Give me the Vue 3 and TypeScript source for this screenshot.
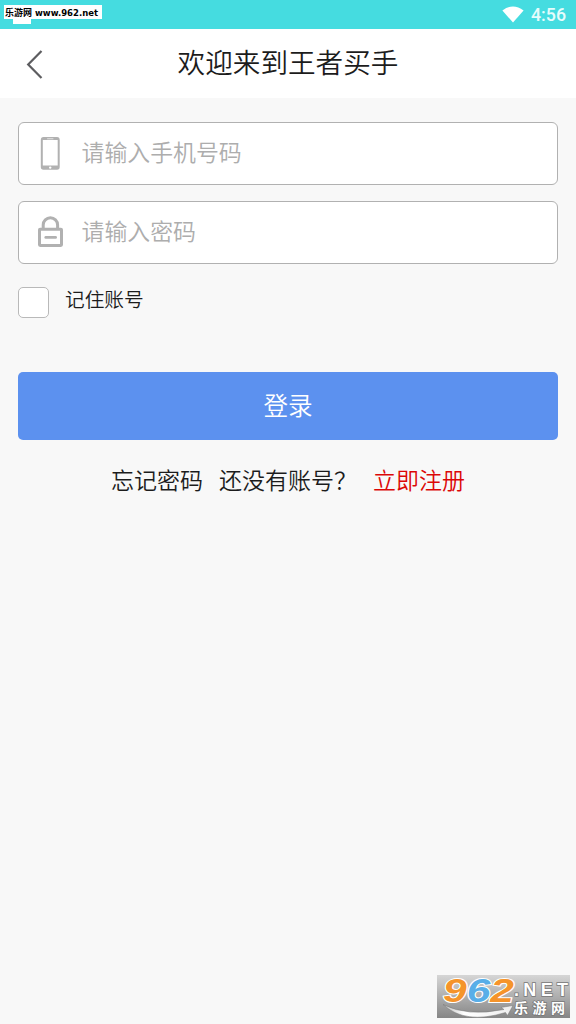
<script setup lang="ts">
import { ref } from 'vue'

const phone = ref('')
const password = ref('')
const remember = ref(false)
</script>

<template>
  <div class="screen">
    <div class="status">
      <span class="notice"></span>
      <span class="site-tag"><b class="site-name">乐游网</b><svg class="site-url" width="67" height="14" viewBox="0 0 67 14"><text x="0" y="11" textLength="63" lengthAdjust="spacingAndGlyphs">www.962.net</text></svg></span>
      <svg class="wifi" width="22" height="17" viewBox="0 0 22 17"><path d="M0.4 4.4Q11-3.6 21.6 4.4L11 16.6Z" fill="#fff" /></svg>
      <span class="clock">4:56</span>
    </div>
    <header class="bar">
      <svg class="back" width="18" height="30" viewBox="0 0 18 30"><path d="M15.5 2L2.2 15.5L15.5 29" fill="none" stroke="#5d5d60" stroke-width="2.2" /></svg>
      <h1>欢迎来到王者买手</h1>
    </header>
    <form class="form" @submit.prevent>
      <label class="field">
        <svg class="icon" width="28" height="34" viewBox="0 0 28 34">
          <path fill="#b1b1b1" fill-rule="evenodd" d="M7.5 0H21Q23.7 0 23.7 3V30Q23.7 32.8 21 32.8H7.5Q4.8 32.8 4.8 30V3Q4.8 0 7.5 0ZM6.8 3V28.6H21.7V3Z" />
          <rect x="11" y="1.3" width="6.5" height="1" rx=".5" fill="#e2e2e2" />
          <circle cx="14.2" cy="30.6" r="1.2" fill="#fff" />
        </svg>
        <input v-model="phone" type="text" placeholder="请输入手机号码" />
      </label>
      <label class="field">
        <svg class="icon" width="28" height="34" viewBox="0 0 28 34">
          <g fill="none" stroke="#b1b1b1" stroke-width="3">
            <rect x="3.5" y="13.2" width="22" height="16.2" rx=".6" />
            <path d="M7.2 13V9A7.2 7.2 0 0 1 21.6 9V13" />
            <path d="M9.8 21.4H19.6" stroke-linecap="round" stroke-width="2.8" />
          </g>
        </svg>
        <input v-model="password" type="password" placeholder="请输入密码" />
      </label>
      <label class="remember">
        <input v-model="remember" type="checkbox" />
        <span>记住账号</span>
      </label>
      <button class="login" type="submit">登录</button>
      <div class="links">
        <span>忘记密码</span>
        <span class="ask">还没有账号？</span>
        <span class="register">立即注册</span>
      </div>
    </form>
    <svg class="mark" width="133" height="43" viewBox="0 0 133 43">
      <defs>
        <linearGradient id="plate" x1="0" y1="0" x2="0" y2="1">
          <stop offset="0" stop-color="#d6d6d6" />
          <stop offset="1" stop-color="#868686" />
        </linearGradient>
        <linearGradient id="swoosh" x1="0" y1="0" x2="1" y2="0">
          <stop offset="0" stop-color="#bbb" />
          <stop offset=".3" stop-color="#fff" />
          <stop offset="1" stop-color="#eee" />
        </linearGradient>
      </defs>
      <rect width="133" height="43" fill="url(#plate)" />
      <path d="M6 29.5Q30 42 67 34.5L64 32.5L76 30.5L70.5 40.5L68.5 37.5Q28 50 6 29.5Z" fill="url(#swoosh)" stroke="#777" stroke-width=".5" />
      <g class="digits">
        <text x="6" y="27" textLength="71" lengthAdjust="spacingAndGlyphs"><tspan fill="#f5942b">9</tspan><tspan fill="#58aee8">6</tspan><tspan fill="#f5942b">2</tspan></text>
      </g>
      <text class="net" x="77" y="21" textLength="54">.NET</text>
      <text class="cn" x="77" y="38" textLength="51">乐游网</text>
    </svg>
  </div>
</template>

<style>
body {
  margin: 0;
  background: #f8f8f8;
}
</style>

<style scoped>
.screen {
  position: relative;
  height: 1024px;
  overflow: hidden;
  background: #f8f8f8;
  color: #1c1c1c;
  font-family: 'Noto Sans CJK SC DemiLight', 'Noto Sans CJK SC', sans-serif;
  font-weight: 350;
}
.status {
  position: relative;
  display: flex;
  align-items: center;
  justify-content: flex-end;
  height: 29px;
  box-sizing: border-box;
  padding-right: 10px;
  background: #45dce0;
}
.site-tag {
  position: absolute;
  left: 4px;
  top: 5px;
  display: flex;
  width: 98px;
  height: 14px;
  background: #fff;
  color: #000;
}
.site-name {
  width: 30px;
  padding-left: 1px;
  font: bold 9px/15px 'Noto Sans CJK SC', sans-serif;
  white-space: nowrap;
}
.site-url text {
  font: bold 9px 'DejaVu Sans', sans-serif;
}
.notice {
  position: absolute;
  left: 13px;
  top: 15px;
  width: 18px;
  height: 9px;
  background: #fff;
}
.wifi {
  margin: 0 7px 1px 0;
}
.clock {
  color: #e6fcfc;
  font: 500 17.8px/30px Roboto, sans-serif;
  padding-top: 1px;
}
.bar {
  display: flex;
  align-items: center;
  justify-content: center;
  position: relative;
  height: 69px;
  background: #fff;
}
.back {
  position: absolute;
  left: 26px;
  top: 20px;
}
h1 {
  margin: 0 0 6px;
  font-size: 27.6px;
  font-weight: inherit;
  line-height: 40px;
}
.form {
  padding: 24px 18px 0;
}
.field {
  display: flex;
  align-items: center;
  box-sizing: border-box;
  height: 63px;
  margin-bottom: 16px;
  padding-left: 17px;
  border: 1px solid #b1b1b1;
  border-radius: 6px;
  background: #fff;
}
.field input {
  flex: 1;
  min-width: 0;
  height: 40px;
  margin: 0 0 5px 17.5px;
  padding: 0;
  border: 0;
  outline: 0;
  background: none;
  font: inherit;
  font-size: 22.9px;
}
.field input::placeholder {
  color: #adadad;
  opacity: 1;
}
.remember {
  display: flex;
  margin-top: 23px;
  height: 31px;
  font-size: 19.7px;
  line-height: 24px;
}
.remember input {
  appearance: none;
  box-sizing: border-box;
  width: 31px;
  height: 31px;
  margin: 0 16px 0 0;
  border: 1px solid #b9b9b9;
  border-radius: 5px;
  background: #fff;
}
.login {
  display: block;
  width: 100%;
  height: 68px;
  margin: 54px 0 0;
  padding: 0 0 4px;
  border: 0;
  border-radius: 5px;
  background: #5c91ef;
  color: #fff;
  font: inherit;
  font-size: 24.6px;
}
.links {
  display: flex;
  justify-content: center;
  margin-top: 22px;
  font-size: 23px;
  line-height: 34px;
}
.ask {
  width: 138px;
  margin: 0 16px;
}
.register {
  color: #dc0707;
}
.mark {
  position: absolute;
  left: 437px;
  top: 975px;
  overflow: visible;
}
.digits text {
  font: italic bold 33px 'Liberation Sans', sans-serif;
  stroke: #fff;
  stroke-width: 2px;
  paint-order: stroke;
}
.net {
  font: bold 18px 'Liberation Sans', sans-serif;
  fill: #fff;
  stroke: #777;
  stroke-width: 1.5px;
  paint-order: stroke;
}
.cn {
  font: bold 14px 'Noto Sans CJK SC', sans-serif;
  fill: #fff;
  stroke: #777;
  stroke-width: 1.5px;
  paint-order: stroke;
}
</style>
